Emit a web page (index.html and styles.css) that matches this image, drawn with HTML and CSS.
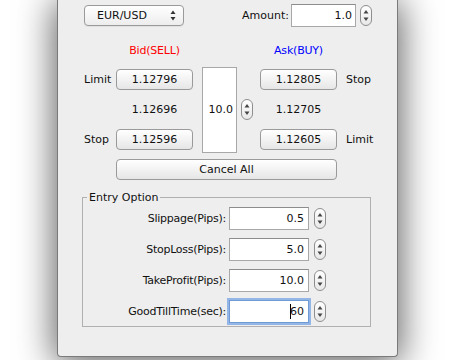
FILE: index.html
```html
<!DOCTYPE html>
<html>
<head>
<meta charset="utf-8">
<link rel="stylesheet" href="styles.css">
</head>
<body>
<div class="window">
  <div class="top">
    <div class="combo">
      <span>EUR/USD</span>
      <svg class="combo-arrows" width="6" height="11" viewBox="0 0 6 11"><path d="M3 0.5 L5.5 4 L0.5 4Z" fill="#333"/><path d="M3 10.5 L5.5 7 L0.5 7Z" fill="#333"/></svg>
    </div>
    <span class="amount-label">Amount:</span>
    <div class="field amount">1.0</div>
    <span class="spin"><svg width="10" height="19" viewBox="0 0 10 19"><path d="M5 4 L7.5 7.5 L2.5 7.5Z" fill="#444"/><path d="M5 15 L7.5 11.5 L2.5 11.5Z" fill="#444"/></svg></span>
  </div>

  <div class="trade">
    <div class="head bid">Bid(SELL)</div>
    <div class="head ask">Ask(BUY)</div>

    <span class="lbl r1 c1">Limit</span>
    <div class="btn r1 c2">1.12796</div>
    <div class="qty">10.0</div>
    <div class="btn r1 c5">1.12805</div>
    <span class="lbl r1 c6">Stop</span>

    <span class="price r2 c2">1.12696</span>
    <span class="spin r2 c4"><svg width="10" height="19" viewBox="0 0 10 19"><path d="M5 4 L7.5 7.5 L2.5 7.5Z" fill="#444"/><path d="M5 15 L7.5 11.5 L2.5 11.5Z" fill="#444"/></svg></span>
    <span class="price r2 c5">1.12705</span>

    <span class="lbl r3 c1">Stop</span>
    <div class="btn r3 c2">1.12596</div>
    <div class="btn r3 c5">1.12605</div>
    <span class="lbl r3 c6">Limit</span>
  </div>

  <div class="btn cancel">Cancel All</div>

  <fieldset class="entry">
    <legend>Entry Option</legend>
    <div class="opts">
      <span class="olbl">Slippage(Pips):</span>
      <div class="field">0.5</div>
      <span class="spin"><svg width="10" height="19" viewBox="0 0 10 19"><path d="M5 4 L7.5 7.5 L2.5 7.5Z" fill="#444"/><path d="M5 15 L7.5 11.5 L2.5 11.5Z" fill="#444"/></svg></span>

      <span class="olbl">StopLoss(Pips):</span>
      <div class="field">5.0</div>
      <span class="spin"><svg width="10" height="19" viewBox="0 0 10 19"><path d="M5 4 L7.5 7.5 L2.5 7.5Z" fill="#444"/><path d="M5 15 L7.5 11.5 L2.5 11.5Z" fill="#444"/></svg></span>

      <span class="olbl">TakeProfit(Pips):</span>
      <div class="field">10.0</div>
      <span class="spin"><svg width="10" height="19" viewBox="0 0 10 19"><path d="M5 4 L7.5 7.5 L2.5 7.5Z" fill="#444"/><path d="M5 15 L7.5 11.5 L2.5 11.5Z" fill="#444"/></svg></span>

      <span class="olbl">GoodTillTime(sec):</span>
      <div class="field focus"><span class="caret"></span>60</div>
      <span class="spin"><svg width="10" height="19" viewBox="0 0 10 19"><path d="M5 4 L7.5 7.5 L2.5 7.5Z" fill="#444"/><path d="M5 15 L7.5 11.5 L2.5 11.5Z" fill="#444"/></svg></span>
    </div>
  </fieldset>
</div>
</body>
</html>
```
FILE: styles.css
```css
html, body {
  margin: 0;
  padding: 0;
  background: #ffffff;
  overflow: hidden;
}
body {
  font-family: "DejaVu Sans", "Liberation Sans", sans-serif;
  font-size: 11px;
  color: #111;
  height: 360px;
}
.window {
  box-sizing: border-box;
  margin-left: 57px;
  width: 341px;
  height: 357px;
  background: #eeeeee;
  border: 1px solid #7a7a7a;
  border-top: none;
  border-radius: 0 0 4px 4px;
  box-shadow: 0 4px 36px 3px rgba(0, 0, 0, 0.62);
  display: flex;
  flex-direction: column;
}
.top {
  display: flex;
  align-items: center;
  height: 23px;
  margin-top: 4px;
  padding-left: 26px;
}
.combo {
  box-sizing: border-box;
  width: 100px;
  height: 21px;
  border: 1px solid #9a9a9a;
  border-radius: 4px;
  background: linear-gradient(#ffffff, #ededed);
  display: flex;
  align-items: center;
  justify-content: space-between;
  padding: 0 7px 0 12px;
  box-shadow: 0 1px 0 rgba(0,0,0,0.05);
}
.combo-arrows { display: block; }
.amount-label {
  margin-left: 58px;
  width: 49px;
}
.field {
  box-sizing: border-box;
  width: 80px;
  height: 23px;
  background: #fff;
  border: 1px solid #a8a8a8;
  border-top-color: #8c8c8c;
  text-align: right;
  line-height: 21px;
  padding-right: 4px;
  position: relative;
}
.field.amount {
  width: 65px;
  padding-right: 3px;
}
.spin {
  box-sizing: border-box;
  width: 12px;
  height: 21px;
  border: 1px solid #8e8e8e;
  border-radius: 6px;
  background: linear-gradient(#ffffff, #e8e8e8);
  display: block;
}
.spin svg { display: block; }
.top .spin { margin-left: 4px; }

.trade {
  margin-top: 16px;
  margin-left: 26px;
  display: grid;
  grid-template-columns: 32px 86px 39px 19px 86px auto;
  grid-template-rows: 17px 21px 21px 21px;
  row-gap: 9px;
  align-items: center;
}
.head {
  grid-row: 1;
  width: 77px;
  text-align: center;
  align-self: start;
  line-height: 13px;
  margin-top: 1px;
  letter-spacing: -0.2px;
}
.bid { grid-column: 2; color: #ff0000; }
.ask { grid-column: 5; color: #0000ff; }
.r1 { grid-row: 2; }
.r2 { grid-row: 3; }
.r3 { grid-row: 4; }
.c1 { grid-column: 1; }
.c2 { grid-column: 2; }
.c4 { grid-column: 4; }
.c5 { grid-column: 5; }
.c6 { grid-column: 6; }
.btn {
  box-sizing: border-box;
  width: 77px;
  height: 21px;
  border: 1px solid #9a9a9a;
  border-radius: 4px;
  background: linear-gradient(#ffffff, #f4f4f4 45%, #e6e6e6);
  text-align: center;
  line-height: 19px;
}
.price {
  width: 77px;
  text-align: center;
}
.qty {
  grid-column: 3;
  grid-row: 2 / 5;
  box-sizing: border-box;
  width: 35px;
  height: 86px;
  background: #fff;
  border: 1px solid #a8a8a8;
  text-align: right;
  padding-right: 3px;
  line-height: 84px;
}
.cancel {
  width: 221px;
  margin-left: 58px;
  margin-top: 9px;
}
.entry {
  box-sizing: border-box;
  margin: 11px 0 0 24px;
  width: 289px;
  border: 1px solid #b0b0b0;
  padding: 3px 0 3px 0;
  min-width: 0;
}
.entry legend {
  padding: 0 2px;
  margin-left: 4px;
  line-height: 13px;
}
.opts {
  display: grid;
  grid-template-columns: 143px 80px 12px;
  grid-auto-rows: 23px;
  column-gap: 3px;
  row-gap: 8px;
  align-items: center;
}
.olbl {
  text-align: right;
  letter-spacing: -0.25px;
}
.opts .spin { margin-left: 2px; }
.field.focus {
  border-color: #6f9ad3;
  box-shadow: 0 0 0 2px #93b6e6;
}
.caret {
  position: absolute;
  left: 60px;
  top: 3px;
  width: 1px;
  height: 15px;
  background: #000;
}
```
